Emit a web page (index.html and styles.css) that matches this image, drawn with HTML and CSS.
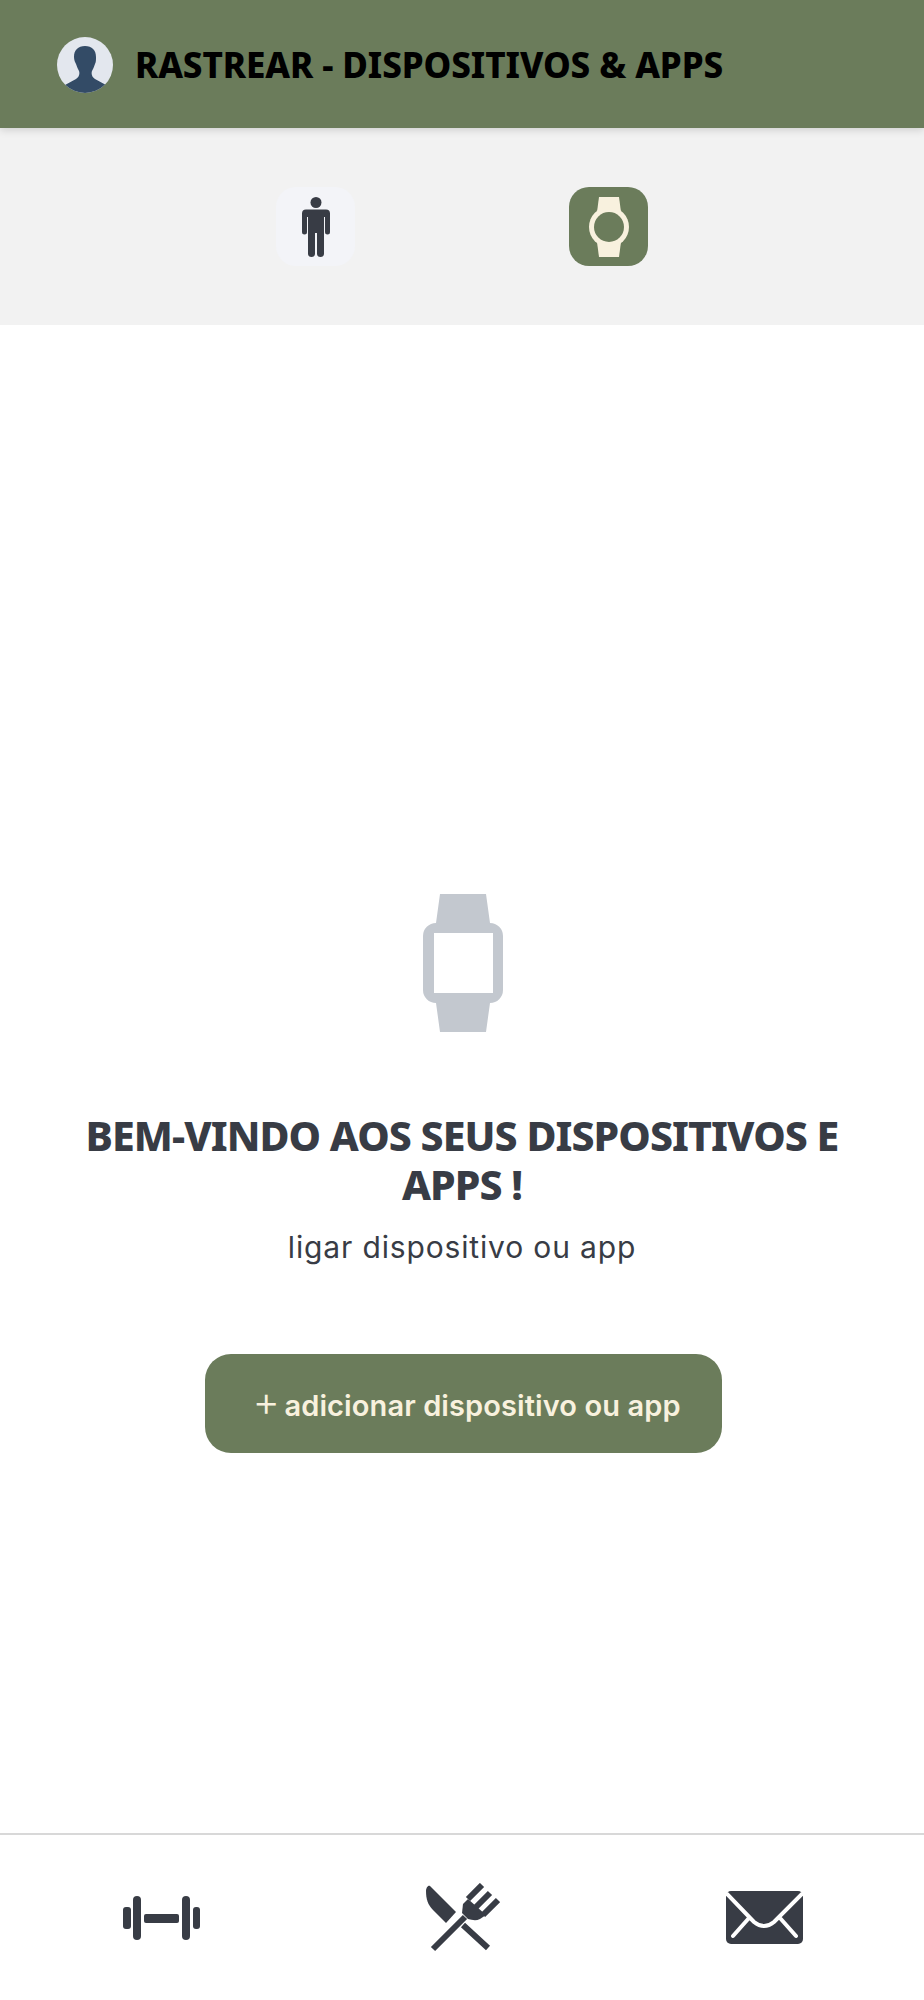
FILE: index.html
```html
<!DOCTYPE html>
<html lang="pt">
<head>
<meta charset="utf-8">
<title>Rastrear</title>
<link rel="stylesheet" href="styles.css">
</head>
<body>
<div class="page">
  <header class="topbar">
    <svg class="avatar" viewBox="0 0 56 56" aria-hidden="true">
      <defs><clipPath id="avatar-clip"><circle cx="28" cy="28" r="28"/></clipPath></defs>
      <circle cx="28" cy="28" r="28" fill="#e3e7ee"/>
      <path clip-path="url(#avatar-clip)" fill="#334b66" d="M28 9c7 0 11 4 11 11 0 3 0 5-1 7-1 3-2 5-3 7-1 3 0 6 3 8l11 6v12H8V48l11-6c3-2 4-5 3-8-1-2-2-4-3-7-1-2-2-4-2-7 0-7 4-11 11-11z"/>
    </svg>
    <h1 class="topbar-title">RASTREAR - DISPOSITIVOS &amp; APPS</h1>
  </header>

  <nav class="tabs">
    <button class="tab" type="button" aria-label="corpo">
      <svg class="tab-person" viewBox="0 0 28 60" aria-hidden="true">
        <circle cx="14" cy="5.5" r="5.5"/>
        <path d="M4 12.5H24a4 4 0 0 1 4 4V35a2.5 2.5 0 0 1-5 0V20h-1V56.5a3.5 3.5 0 0 1-7 0V36h-2V56.5a3.5 3.5 0 0 1-7 0V20H5V35a2.5 2.5 0 0 1-5 0V16.5a4 4 0 0 1 4-4z"/>
      </svg>
    </button>
    <button class="tab tab-active" type="button" aria-label="dispositivos">
      <svg class="tab-watch" viewBox="0 0 40 60" aria-hidden="true">
        <path class="watch-body" d="M10 0H30L32 15 32 45 30 60H10L8 45 8 15z"/>
        <circle class="watch-body" cx="20" cy="30" r="20"/>
        <circle class="watch-face" cx="20" cy="30" r="15"/>
      </svg>
    </button>
  </nav>

  <main class="welcome">
    <svg class="welcome-watch" viewBox="0 0 80 138" aria-hidden="true">
      <path fill-rule="evenodd" d="M17 0H63L67 29A13 13 0 0 1 80 42V96A13 13 0 0 1 67 109L63 138H17L13 109A13 13 0 0 1 0 96V42A13 13 0 0 1 13 29zM11 39V99H70V39z"/>
    </svg>
    <h2 class="welcome-title">BEM-VINDO AOS SEUS DISPOSITIVOS E APPS !</h2>
    <p class="welcome-text">ligar dispositivo ou app</p>
    <button class="add-button" type="button"><span class="add-plus">+</span> adicionar dispositivo ou app</button>
  </main>

  <footer class="bottom-nav">
    <svg class="nav-dumbbell" viewBox="0 0 77 44" aria-hidden="true">
      <rect x="0" y="11" width="8" height="22" rx="3"/>
      <rect x="10" y="0" width="8" height="44" rx="4"/>
      <rect x="21" y="18" width="35" height="9" rx="2"/>
      <rect x="59" y="0" width="8" height="44" rx="4"/>
      <rect x="70" y="11" width="7" height="22" rx="3"/>
    </svg>
    <svg class="nav-food" viewBox="0 0 74 70" aria-hidden="true">
      <path class="food-fill" d="M4 3L30 29 20 40 7 27C2 22 0 16 0 8 0 5 2 2 4 3z"/>
      <path class="food-line" d="M7 66L39 34M37 42L62 65M42 16L56 2M50 24L64 10M57 32L72 17"/>
      <path class="food-fill" d="M37 21L42 16 60 32 54 36C50 38 46 37 42 36L36 30z"/>
    </svg>
    <svg class="nav-mail" viewBox="0 0 77 53" aria-hidden="true">
      <rect class="mail-body" width="77" height="53" rx="5"/>
      <path class="mail-line" d="M1 3L28 31Q38 39 48 31L76 3M23 27L7 45M54 27L70 45"/>
    </svg>
  </footer>
</div>
</body>
</html>
```

FILE: styles.css
```css
* { box-sizing: border-box; }

html, body {
  margin: 0;
  background: #ffffff;
}

.page {
  width: 924px;
  height: 2000px;
  display: flex;
  flex-direction: column;
  color: #383c45;
}

.topbar {
  height: 128px;
  flex: none;
  display: flex;
  align-items: center;
  gap: 22px;
  padding-left: 57px;
  background: #6b7c5b;
  box-shadow: 0 2px 8px rgba(0, 0, 0, 0.15);
  position: relative;
}

.avatar {
  width: 56px;
  height: 56px;
  flex: none;
  margin-top: 2px;
}

.topbar-title {
  margin: 0;
  font-family: "Noto Sans", sans-serif;
  font-weight: 800;
  font-size: 35px;
  letter-spacing: -0.1px;
  line-height: 1;
  color: #000000;
  white-space: nowrap;
}

.tabs {
  height: 197px;
  flex: none;
  display: flex;
  justify-content: center;
  gap: 214px;
  padding-top: 59px;
  background: #f2f2f2;
}

.tab {
  width: 79px;
  height: 79px;
  padding: 0;
  border: 0;
  border-radius: 20px;
  background: #f3f4f8;
  display: flex;
  align-items: center;
  justify-content: center;
}

.tab-active {
  background: #6b7c5b;
}

.tab-person {
  width: 28px;
  height: 60px;
  fill: #383c45;
}

.tab-watch {
  width: 40px;
  height: 60px;
}

.watch-body { fill: #f8f1de; }
.watch-face { fill: #6b7c5b; }

.welcome {
  flex: 1;
  display: flex;
  flex-direction: column;
  align-items: center;
  padding-top: 569px;
}

.welcome-watch {
  width: 80px;
  height: 138px;
  margin-left: 2px;
  fill: #c3c8cf;
  filter: blur(0.6px);
}

.welcome-title {
  margin: 79px 0 0;
  width: 780px;
  text-align: center;
  font-family: "Noto Sans", sans-serif;
  font-weight: 800;
  font-size: 41px;
  letter-spacing: -0.95px;
  line-height: 49px;
  color: #383c45;
}

.welcome-text {
  margin: 19px 0 0;
  font-family: "Inter", sans-serif;
  font-size: 30px;
  letter-spacing: 0.85px;
  line-height: 38px;
  color: #383c45;
}

.add-button {
  margin: 88px 0 0 2px;
  width: 517px;
  height: 99px;
  border: 0;
  border-radius: 26px;
  padding: 3px 0 0 48px;
  background: #6b7c5b;
  color: #f8f1de;
  text-align: left;
  font-family: "Inter", sans-serif;
  font-weight: 600;
  font-size: 29px;
  letter-spacing: 0.1px;
  white-space: nowrap;
}

.add-plus {
  font-weight: 300;
  font-size: 42px;
  line-height: 0;
  margin-right: -3px;
}

.bottom-nav {
  height: 167px;
  flex: none;
  display: flex;
  align-items: center;
  justify-content: space-between;
  padding: 0 121px 0 123px;
  border-top: 2px solid #d8d8d8;
}

.nav-dumbbell { width: 77px; height: 44px; fill: #383c45; }
.nav-food { width: 74px; height: 70px; }
.nav-mail { width: 77px; height: 53px; }

.food-fill { fill: #383c45; }
.food-line { fill: none; stroke: #383c45; stroke-width: 6; }
.mail-body { fill: #383c45; }
.mail-line { fill: none; stroke: #ffffff; stroke-width: 4; stroke-linecap: round; }
```
